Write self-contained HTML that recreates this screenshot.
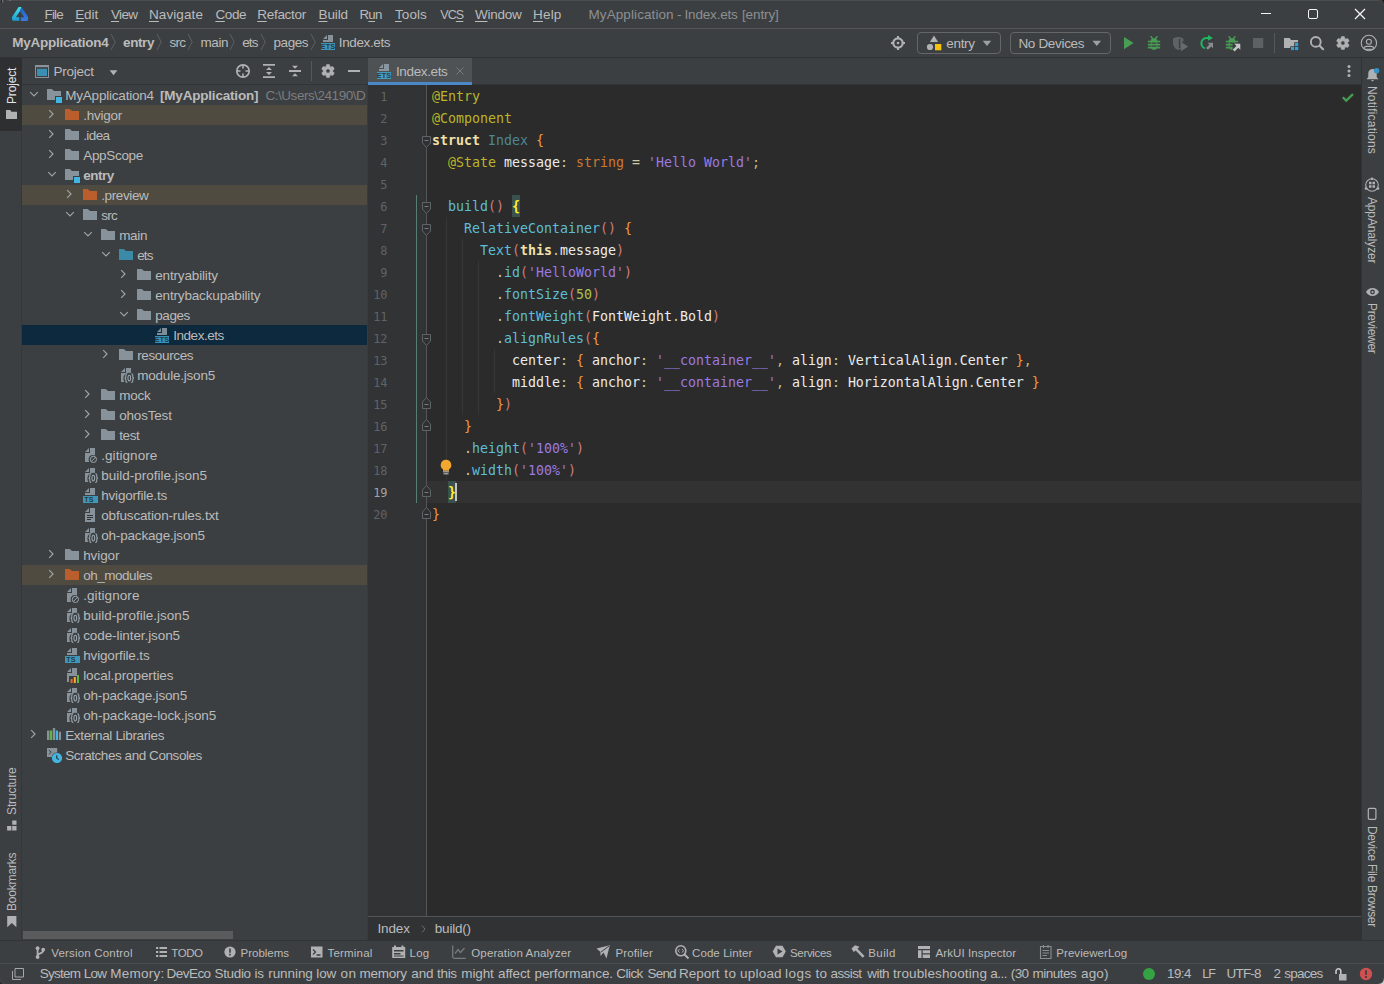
<!DOCTYPE html>
<html lang="en">
<head>
<meta charset="utf-8">
<title>MyApplication - Index.ets [entry]</title>
<style>
html,body{margin:0;padding:0;background:#3c3f41;}
body{width:1384px;height:984px;overflow:hidden;font-family:"Liberation Sans",sans-serif;font-size:13px;color:#bbbbbb;}
#app{position:relative;width:1384px;height:984px;overflow:hidden;background:#3c3f41;}
.b{position:absolute;display:block;}
.t{position:absolute;white-space:pre;line-height:20px;height:20px;}
.u{text-decoration:underline;text-underline-offset:2px;text-decoration-thickness:1px;}
.code{position:absolute;white-space:pre;font-family:"DejaVu Sans Mono","Liberation Mono",monospace;font-size:13.29px;line-height:22px;height:22px;color:#e6e6e6;}
.ln{position:absolute;white-space:pre;font-family:"DejaVu Sans Mono","Liberation Mono",monospace;font-size:11.9px;line-height:22px;height:22px;color:#606366;text-align:right;width:30px;}
.vt{position:absolute;white-space:pre;line-height:14px;height:14px;font-size:12px;transform-origin:0 0;}

</style>
</head>
<body>
<div id="app">
<!-- title bar -->
<div class="b" style="left:0px;top:0px;width:1384px;height:1px;background:#4b4d4f;"></div>
<div class="b" style="left:0px;top:28px;width:1384px;height:1px;background:#555555;"></div>
<svg class="b" style="left:10px;top:5px;" width="20" height="18" viewBox="10 5 20 18"><defs><linearGradient id="lgA" x1="0" y1="0" x2="0" y2="1"><stop offset="0" stop-color="#45e0ea"/><stop offset="1" stop-color="#1a9bd2"/></linearGradient><linearGradient id="lgB" x1="0" y1="0" x2="0" y2="1"><stop offset="0" stop-color="#1f63c8"/><stop offset="1" stop-color="#3b7be0"/></linearGradient></defs><path fill="url(#lgA)" d="M18.600 7h2.900l-1.500 3.900-4.100 6.300h3.400v3.600h-5.900q-.9 0-1.300-1.200l-.2-1.700q-.1-.5.300-1.200z"/><path fill="url(#lgB)" d="M21.500 7l6.400 9.800q.4.700.3 1.200l-.2 1.700q-.4 1.200-1.300 1.200h-5.900v-3.600h3.400l-4.200-6.400z"/></svg>
<span class="t" style="left:44.5px;top:5px;font-size:13.5px;letter-spacing:-0.815px;"><span class="u">F</span>ile</span>
<span class="t" style="left:75.2px;top:5px;font-size:13.5px;letter-spacing:-0.104px;"><span class="u">E</span>dit</span>
<span class="t" style="left:111px;top:5px;font-size:13.5px;letter-spacing:-0.689px;"><span class="u">V</span>iew</span>
<span class="t" style="left:149px;top:5px;font-size:13.5px;letter-spacing:0.090px;"><span class="u">N</span>avigate</span>
<span class="t" style="left:215.4px;top:5px;font-size:13.5px;letter-spacing:-0.388px;"><span class="u">C</span>ode</span>
<span class="t" style="left:257.2px;top:5px;font-size:13.5px;letter-spacing:-0.275px;"><span class="u">R</span>efactor</span>
<span class="t" style="left:318.5px;top:5px;font-size:13.5px;letter-spacing:-0.128px;"><span class="u">B</span>uild</span>
<span class="t" style="left:359.5px;top:5px;font-size:13.25px;letter-spacing:-0.719px;">R<span class="u">u</span>n</span>
<span class="t" style="left:395px;top:5px;font-size:13.5px;letter-spacing:0.059px;"><span class="u">T</span>ools</span>
<span class="t" style="left:440.17px;top:5px;font-size:12.5px;letter-spacing:-0.850px;">VC<span class="u">S</span></span>
<span class="t" style="left:475px;top:5px;font-size:13.5px;letter-spacing:-0.253px;"><span class="u">W</span>indow</span>
<span class="t" style="left:533px;top:5px;font-size:13.5px;letter-spacing:0.181px;"><span class="u">H</span>elp</span>
<span class="t" style="left:588.5px;top:5px;font-size:13.5px;color:#8d8f91;letter-spacing:0.089px;">MyApplication </span><span class="t" style="left:677px;top:5px;font-size:13.5px;color:#8d8f91;">- </span><span class="t" style="left:684.5px;top:5px;font-size:13.5px;color:#8d8f91;letter-spacing:-0.179px;">Index.ets </span><span class="t" style="left:742px;top:5px;font-size:13.5px;color:#8d8f91;letter-spacing:-0.127px;">[entry]</span>
<svg class="b" style="left:1255px;top:4px;" width="116" height="20" viewBox="1255 4 116 20"><rect x="1261" y="13" width="10" height="1" fill="#f4f4f4"/><rect x="1308.500" y="9.500" width="9" height="9" rx="1.500" fill="none" stroke="#f4f4f4" stroke-width="1"/><path stroke="#f4f4f4" stroke-width="1.250" fill="none" d="M1355 9l10 10M1365 9l-10 10"/></svg>
<!-- navigation bar -->
<div class="b" style="left:0px;top:57px;width:1384px;height:1px;background:#313233;"></div>
<span class="t" style="left:12.3px;top:33px;font-size:13.5px;font-weight:700;letter-spacing:-0.250px;">MyApplication4</span>
<svg class="b" style="left:109.9px;top:33px;" width="7" height="18" viewBox="0 0 7 18"><path fill="none" stroke="#5d6062" stroke-width="1" d="M1 1l4.200 8L1 17"/></svg>
<span class="t" style="left:123px;top:33px;font-size:13.5px;font-weight:700;letter-spacing:-0.376px;">entry</span>
<svg class="b" style="left:155.9px;top:33px;" width="7" height="18" viewBox="0 0 7 18"><path fill="none" stroke="#5d6062" stroke-width="1" d="M1 1l4.200 8L1 17"/></svg>
<span class="t" style="left:169.4px;top:33px;font-size:13.5px;letter-spacing:-0.723px;">src</span>
<svg class="b" style="left:186.9px;top:33px;" width="7" height="18" viewBox="0 0 7 18"><path fill="none" stroke="#5d6062" stroke-width="1" d="M1 1l4.200 8L1 17"/></svg>
<span class="t" style="left:200.6px;top:33px;font-size:13.5px;letter-spacing:-0.484px;">main</span>
<svg class="b" style="left:228.9px;top:33px;" width="7" height="18" viewBox="0 0 7 18"><path fill="none" stroke="#5d6062" stroke-width="1" d="M1 1l4.200 8L1 17"/></svg>
<span class="t" style="left:242.2px;top:33px;font-size:13.5px;letter-spacing:-0.829px;">ets</span>
<svg class="b" style="left:259.9px;top:33px;" width="7" height="18" viewBox="0 0 7 18"><path fill="none" stroke="#5d6062" stroke-width="1" d="M1 1l4.200 8L1 17"/></svg>
<span class="t" style="left:273.5px;top:33px;font-size:13.5px;letter-spacing:-0.433px;">pages</span>
<svg class="b" style="left:309.9px;top:33px;" width="7" height="18" viewBox="0 0 7 18"><path fill="none" stroke="#5d6062" stroke-width="1" d="M1 1l4.200 8L1 17"/></svg>
<svg class="b" style="left:320px;top:34px;" width="16" height="16" viewBox="0 0 16 16"><path fill="#9AA7B0" fill-opacity=".8" d="M7 1 3 5h4z"/><path fill="#9AA7B0" fill-opacity=".8" d="M8 1v5H3v2h10V1z"/><rect x="1" y="9" width="14" height="7" fill="#40B6E0" fill-opacity=".75"/><text x="8.0" y="15.300" font-family="Liberation Sans,sans-serif" font-size="7.200" font-weight="700" letter-spacing=".2" text-anchor="middle" fill="#231F20" fill-opacity=".8">ETS</text></svg>
<span class="t" style="left:338.8px;top:33px;font-size:13.5px;letter-spacing:-0.379px;">Index.ets</span>
<svg class="b" style="left:880px;top:30px;" width="504" height="26" viewBox="880 30 504 26"><circle cx="898" cy="43" r="4.700" fill="none" stroke="#afb1b3" stroke-width="2.200"/><circle cx="898" cy="43" r="1.300" fill="#afb1b3"/><path stroke="#afb1b3" stroke-width="2" d="M898 36v2M898 48v2M891 43h2M903 43h2"/><path fill="#afb1b3" d="M934 35.500l4.100 6.600h-8.200z"/><circle cx="930" cy="47" r="3.100" fill="#afb1b3"/><rect x="935" y="44" width="6.300" height="6.300" fill="#f4c20d"/><path fill="#9da0a2" d="M982.700 40.800h8.600L987 46z"/><path fill="#9da0a2" d="M1092.500 40.800h8.600l-4.300 5.200z"/><path fill="#499c54" d="M1124 37l9.600 6.100L1124 49.200z"/><path stroke="#499c54" stroke-width="1.500" stroke-linecap="round" fill="none" d="M1151.1 36.699999999999996l1.900 2.400M1156.9 36.699999999999996l-1.900 2.400"/><path fill="#499c54" d="M1150.6 41.5a3.400 3.300 0 0 1 6.800 0v4.600a3.400 3.800 0 0 1-6.800 0z"/><path stroke="#499c54" stroke-width="1.700" d="M1147.8 41.5h12.400M1147.8 44.599999999999994h12.400M1147.8 47.7h12.400"/><path stroke="#3c3f41" stroke-width="1.200" d="M1151.5 43.05h5M1151.5 46.15h5"/><path fill="#5f6264" d="M1173 38.300l5.200-1.500 5.200 1.500v3.200l-2.600 1.300v6.200c-.7.300-1.600.700-2.600 1-3.400-1.100-5.200-3.500-5.200-7.200z"/><path fill="#3c3f41" d="M1178.900 39h1.300v9h-1.300z"/><path fill="#666a6c" d="M1181 42l7.200 4.600L1181 51.200z"/><path fill="none" stroke="#23b560" stroke-width="2" d="M1205 48.400A5.300 5.300 0 1 1 1208.500 38.200"/><path fill="#23b560" d="M1208 35l4.900 2.900-4.900 2.900z"/><path fill="#8a8d8f" d="M1207.600 42.800h5.400v5.400l-1.800-1.800-3.300 3.300-1.800-1.800 3.300-3.300z"/><path stroke="#499c54" stroke-width="1.500" stroke-linecap="round" fill="none" d="M1229.1 36.699999999999996l1.900 2.400M1234.9 36.699999999999996l-1.900 2.400"/><path fill="#499c54" d="M1228.6 41.5a3.400 3.300 0 0 1 6.800 0v4.600a3.400 3.800 0 0 1-6.800 0z"/><path stroke="#499c54" stroke-width="1.700" d="M1225.8 41.5h12.400M1225.8 44.599999999999994h12.400M1225.8 47.7h12.400"/><path stroke="#3c3f41" stroke-width="1.200" d="M1229.5 43.05h5M1229.5 46.15h5"/><path fill="#3c3f41" d="M1232.600 43.300h9v9h-9z"/><path fill="#c6c8ca" d="M1234.300 43.700h6v6l-2-2-3.700 3.700-1.800-1.800 3.700-3.700z"/><rect x="1253" y="38" width="10.200" height="10" fill="#5e6163"/><rect x="1274" y="33" width="1" height="20" fill="#555759"/><path fill="#afb1b3" d="M1284 38h5.700l1.300 2h7v2.200h-3.800v4h-4v1.800H1284z"/><rect x="1291" y="47" width="3.100" height="3.100" fill="#389fd6"/><rect x="1295.100" y="47" width="3.100" height="3.100" fill="#389fd6"/><rect x="1295.100" y="43" width="3.100" height="3.100" fill="#389fd6"/><circle cx="1315.800" cy="41.900" r="4.900" fill="none" stroke="#afb1b3" stroke-width="1.900"/><path stroke="#afb1b3" stroke-width="2.200" stroke-linecap="round" d="M1319.600 45.700l3.500 3.500"/><path fill="#afb1b3" fill-rule="evenodd" stroke="#afb1b3" stroke-width=".8" stroke-linejoin="round" d="M1340.90 38.75 L1341.55 36.64 L1344.25 36.64 L1344.90 38.75 L1345.58 39.14 L1347.73 38.65 L1349.08 40.99 L1347.58 42.61 L1347.58 43.39 L1349.08 45.01 L1347.73 47.35 L1345.58 46.86 L1344.90 47.25 L1344.25 49.36 L1341.55 49.36 L1340.90 47.25 L1340.22 46.86 L1338.07 47.35 L1336.72 45.01 L1338.22 43.39 L1338.22 42.61 L1336.72 40.99 L1338.07 38.65 L1340.22 39.14Z M1340.70 43.00a2.2 2.2 0 1 0 4.4 0a2.2 2.2 0 1 0 -4.4 0Z"/><circle cx="1368.900" cy="43" r="7.700" fill="none" stroke="#afb1b3" stroke-width="1.100"/><circle cx="1368.900" cy="41.700" r="2.500" fill="none" stroke="#afb1b3" stroke-width="1.100"/><path fill="none" stroke="#afb1b3" stroke-width="1.100" d="M1363.600 48.600c.4-1.500 1.400-2.200 2.800-2.200h5c1.400 0 2.400.7 2.800 2.200"/><path stroke="#afb1b3" stroke-width="1.100" d="M1364.300 49.300h9.200"/></svg>
<div class="b" style="left:917px;top:32px;width:84px;height:22px;border:1px solid #646668;border-radius:4px;box-sizing:border-box;"></div>
<span class="t" style="left:946.3px;top:34px;font-size:13.5px;letter-spacing:-0.316px;">entry</span>
<div class="b" style="left:1010px;top:32px;width:101px;height:22px;border:1px solid #646668;border-radius:4px;box-sizing:border-box;"></div>
<span class="t" style="left:1018.4px;top:34px;font-size:13.5px;letter-spacing:-0.319px;">No Devices</span>
<!-- project tool window header -->
<div class="b" style="left:0px;top:84px;width:368px;height:1px;background:#323537;"></div>
<svg class="b" style="left:35px;top:65px;" width="14" height="13" viewBox="0 0 14 13"><rect x=".5" y=".5" width="13" height="12" fill="none" stroke="#87929a" stroke-width="1"/><rect x="0" y="0" width="14" height="2.200" fill="#87929a"/><rect x="2" y="3.800" width="10" height="7.200" fill="#3a8fb4"/></svg>
<span class="t" style="left:53.6px;top:62px;font-size:13.5px;letter-spacing:-0.278px;">Project</span>
<svg class="b" style="left:109px;top:70px;" width="9" height="6" viewBox="0 0 9 6"><path fill="#afb1b3" d="M.6.200h7.800L4.500 5.300z"/></svg>
<svg class="b" style="left:235px;top:63px;" width="16" height="16" viewBox="0 0 16 16"><circle cx="8" cy="8" r="6.200" fill="none" stroke="#afb1b3" stroke-width="1.700"/><path stroke="#afb1b3" stroke-width="1.600" d="M8 1.500v4M8 10.500v4M1.500 8h4M10.500 8h4"/></svg>
<svg class="b" style="left:261px;top:63px;" width="16" height="16" viewBox="0 0 16 16"><path fill="#afb1b3" d="M2 1h12v1.800H2zM2 13.200h12V15H2zM8 4l3 3H5zM8 12l3-3H5z"/></svg>
<svg class="b" style="left:287px;top:63px;" width="16" height="16" viewBox="0 0 16 16"><path fill="#afb1b3" d="M2 7.100h12v1.800H2zM8 5.800l3-3H5zM8 10.200l3 3H5z"/></svg>
<div class="b" style="left:311px;top:61px;width:1px;height:20px;background:#555759;"></div>
<svg class="b" style="left:320px;top:63px;" width="16" height="16" viewBox="320 63 16 16"><path fill="#afb1b3" fill-rule="evenodd" stroke="#afb1b3" stroke-width=".8" stroke-linejoin="round" d="M326.00 66.75 L326.65 64.64 L329.35 64.64 L330.00 66.75 L330.68 67.14 L332.83 66.65 L334.18 68.99 L332.68 70.61 L332.68 71.39 L334.18 73.01 L332.83 75.35 L330.68 74.86 L330.00 75.25 L329.35 77.36 L326.65 77.36 L326.00 75.25 L325.32 74.86 L323.17 75.35 L321.82 73.01 L323.32 71.39 L323.32 70.61 L321.82 68.99 L323.17 66.65 L325.32 67.14Z M325.80 71.00a2.2 2.2 0 1 0 4.4 0a2.2 2.2 0 1 0 -4.4 0Z"/></svg>
<div class="b" style="left:348px;top:70px;width:12px;height:2px;background:#afb1b3;"></div>
<!-- editor tabs -->
<div class="b" style="left:368px;top:58px;width:104px;height:27px;background:#4e5254;"></div>
<div class="b" style="left:368px;top:82px;width:104px;height:3px;background:#4a88c7;"></div>
<div class="b" style="left:472px;top:84px;width:889px;height:1px;background:#323537;"></div>
<svg class="b" style="left:376px;top:63px;" width="16" height="16" viewBox="0 0 16 16"><path fill="#9AA7B0" fill-opacity=".8" d="M7 1 3 5h4z"/><path fill="#9AA7B0" fill-opacity=".8" d="M8 1v5H3v2h10V1z"/><rect x="1" y="9" width="14" height="7" fill="#40B6E0" fill-opacity=".75"/><text x="8.0" y="15.300" font-family="Liberation Sans,sans-serif" font-size="7.200" font-weight="700" letter-spacing=".2" text-anchor="middle" fill="#231F20" fill-opacity=".8">ETS</text></svg>
<span class="t" style="left:396px;top:62px;font-size:13.5px;letter-spacing:-0.379px;">Index.ets</span>
<svg class="b" style="left:454px;top:65px;" width="12" height="12" viewBox="0 0 12 12"><path stroke="#77797b" stroke-width="1" d="M2.500 2.500l7 7M9.500 2.500l-7 7"/></svg>
<svg class="b" style="left:1346px;top:64px;" width="6" height="14" viewBox="0 0 6 14"><circle cx="3" cy="2.500" r="1.500" fill="#afb1b3"/><circle cx="3" cy="7" r="1.500" fill="#afb1b3"/><circle cx="3" cy="11.500" r="1.500" fill="#afb1b3"/></svg>
<!-- project tree -->
<div class="b" style="left:22px;top:85px;width:345px;height:855px;overflow:hidden;">
<svg class="b" style="left:5.5px;top:5.2px;" width="12" height="8" viewBox="0 0 12 8"><path fill="none" stroke="#a0a3a5" stroke-width="1.2" d="M2.200 2.200 6 6 9.800 2.200"/></svg>
<svg class="b" style="left:24px;top:2px;" width="16" height="16" viewBox="0 0 16 16"><path fill="#9AA7B0" fill-opacity=".8" d="M1 13h8V9h6V4H8L5.800 2H1z"/><rect x="10" y="10" width="6" height="6" fill="#40B6E0"/></svg>
<span class="t" style="left:43.2px;top:1px;font-size:13.5px;letter-spacing:-0.203px;">MyApplication4</span>
<span class="t" style="left:138px;top:1px;font-size:13.5px;font-weight:700;letter-spacing:-0.196px;">[MyApplication]</span>
<span class="t" style="left:243.5px;top:1px;font-size:13.5px;color:#7b7d7f;letter-spacing:-0.470px;">C:\Users\24190\D</span>
<div class="b" style="left:0px;top:20px;width:345px;height:20px;background:#4f4b41;"></div>
<svg class="b" style="left:25.2px;top:23.4px;" width="8" height="12" viewBox="0 0 8 12"><path fill="none" stroke="#a0a3a5" stroke-width="1.2" d="M2.200 2.200 6 6 2.200 9.800"/></svg>
<svg class="b" style="left:42px;top:22px;" width="16" height="16" viewBox="0 0 16 16"><path fill="#b95e2c" d="M1 13h14V4H8L5.800 2H1z"/></svg>
<span class="t" style="left:61.2px;top:21px;font-size:13.5px;letter-spacing:-0.254px;">.hvigor</span>
<svg class="b" style="left:25.2px;top:43.4px;" width="8" height="12" viewBox="0 0 8 12"><path fill="none" stroke="#a0a3a5" stroke-width="1.2" d="M2.200 2.200 6 6 2.200 9.800"/></svg>
<svg class="b" style="left:42px;top:42px;" width="16" height="16" viewBox="0 0 16 16"><path fill="#9AA7B0" fill-opacity=".8" d="M1 13h14V4H8L5.800 2H1z"/></svg>
<span class="t" style="left:61.2px;top:41px;font-size:13.5px;letter-spacing:-0.592px;">.idea</span>
<svg class="b" style="left:25.2px;top:63.4px;" width="8" height="12" viewBox="0 0 8 12"><path fill="none" stroke="#a0a3a5" stroke-width="1.2" d="M2.200 2.200 6 6 2.200 9.800"/></svg>
<svg class="b" style="left:42px;top:62px;" width="16" height="16" viewBox="0 0 16 16"><path fill="#9AA7B0" fill-opacity=".8" d="M1 13h14V4H8L5.800 2H1z"/></svg>
<span class="t" style="left:61.2px;top:61px;font-size:13.5px;letter-spacing:-0.313px;">AppScope</span>
<svg class="b" style="left:23.5px;top:85.2px;" width="12" height="8" viewBox="0 0 12 8"><path fill="none" stroke="#a0a3a5" stroke-width="1.2" d="M2.200 2.200 6 6 9.800 2.200"/></svg>
<svg class="b" style="left:42px;top:82px;" width="16" height="16" viewBox="0 0 16 16"><path fill="#9AA7B0" fill-opacity=".8" d="M1 13h8V9h6V4H8L5.800 2H1z"/><rect x="10" y="10" width="6" height="6" fill="#40B6E0"/></svg>
<span class="t" style="left:61.2px;top:81px;font-size:13.5px;font-weight:700;letter-spacing:-0.476px;">entry</span>
<div class="b" style="left:0px;top:100px;width:345px;height:20px;background:#4f4b41;"></div>
<svg class="b" style="left:43.2px;top:103.4px;" width="8" height="12" viewBox="0 0 8 12"><path fill="none" stroke="#a0a3a5" stroke-width="1.2" d="M2.200 2.200 6 6 2.200 9.800"/></svg>
<svg class="b" style="left:60px;top:102px;" width="16" height="16" viewBox="0 0 16 16"><path fill="#b95e2c" d="M1 13h14V4H8L5.800 2H1z"/></svg>
<span class="t" style="left:79.2px;top:101px;font-size:13.5px;letter-spacing:-0.374px;">.preview</span>
<svg class="b" style="left:41.5px;top:125.2px;" width="12" height="8" viewBox="0 0 12 8"><path fill="none" stroke="#a0a3a5" stroke-width="1.2" d="M2.200 2.200 6 6 9.800 2.200"/></svg>
<svg class="b" style="left:60px;top:122px;" width="16" height="16" viewBox="0 0 16 16"><path fill="#9AA7B0" fill-opacity=".8" d="M1 13h14V4H8L5.800 2H1z"/></svg>
<span class="t" style="left:79.2px;top:121px;font-size:13.5px;letter-spacing:-0.723px;">src</span>
<svg class="b" style="left:59.5px;top:145.2px;" width="12" height="8" viewBox="0 0 12 8"><path fill="none" stroke="#a0a3a5" stroke-width="1.2" d="M2.200 2.200 6 6 9.800 2.200"/></svg>
<svg class="b" style="left:78px;top:142px;" width="16" height="16" viewBox="0 0 16 16"><path fill="#9AA7B0" fill-opacity=".8" d="M1 13h14V4H8L5.800 2H1z"/></svg>
<span class="t" style="left:97.2px;top:141px;font-size:13.5px;letter-spacing:-0.351px;">main</span>
<svg class="b" style="left:77.5px;top:165.2px;" width="12" height="8" viewBox="0 0 12 8"><path fill="none" stroke="#a0a3a5" stroke-width="1.2" d="M2.200 2.200 6 6 9.800 2.200"/></svg>
<svg class="b" style="left:96px;top:162px;" width="16" height="16" viewBox="0 0 16 16"><path fill="#3a8aa8" d="M1 13h14V4H8L5.800 2H1z"/></svg>
<span class="t" style="left:115.2px;top:161px;font-size:13.5px;letter-spacing:-0.829px;">ets</span>
<svg class="b" style="left:97.2px;top:183.4px;" width="8" height="12" viewBox="0 0 8 12"><path fill="none" stroke="#a0a3a5" stroke-width="1.2" d="M2.200 2.200 6 6 2.200 9.800"/></svg>
<svg class="b" style="left:114px;top:182px;" width="16" height="16" viewBox="0 0 16 16"><path fill="#9AA7B0" fill-opacity=".8" d="M1 13h14V4H8L5.800 2H1z"/></svg>
<span class="t" style="left:133.2px;top:181px;font-size:13.5px;letter-spacing:-0.152px;">entryability</span>
<svg class="b" style="left:97.2px;top:203.4px;" width="8" height="12" viewBox="0 0 8 12"><path fill="none" stroke="#a0a3a5" stroke-width="1.2" d="M2.200 2.200 6 6 2.200 9.800"/></svg>
<svg class="b" style="left:114px;top:202px;" width="16" height="16" viewBox="0 0 16 16"><path fill="#9AA7B0" fill-opacity=".8" d="M1 13h14V4H8L5.800 2H1z"/></svg>
<span class="t" style="left:133.2px;top:201px;font-size:13.5px;letter-spacing:-0.159px;">entrybackupability</span>
<svg class="b" style="left:95.5px;top:225.2px;" width="12" height="8" viewBox="0 0 12 8"><path fill="none" stroke="#a0a3a5" stroke-width="1.2" d="M2.200 2.200 6 6 9.800 2.200"/></svg>
<svg class="b" style="left:114px;top:222px;" width="16" height="16" viewBox="0 0 16 16"><path fill="#9AA7B0" fill-opacity=".8" d="M1 13h14V4H8L5.800 2H1z"/></svg>
<span class="t" style="left:133.2px;top:221px;font-size:13.5px;letter-spacing:-0.408px;">pages</span>
<div class="b" style="left:0px;top:240px;width:345px;height:20px;background:#0d293e;"></div>
<svg class="b" style="left:132px;top:242px;" width="16" height="16" viewBox="0 0 16 16"><path fill="#9AA7B0" fill-opacity=".8" d="M7 1 3 5h4z"/><path fill="#9AA7B0" fill-opacity=".8" d="M8 1v5H3v2h10V1z"/><rect x="1" y="9" width="14" height="7" fill="#40B6E0" fill-opacity=".75"/><text x="8.0" y="15.300" font-family="Liberation Sans,sans-serif" font-size="7.200" font-weight="700" letter-spacing=".2" text-anchor="middle" fill="#231F20" fill-opacity=".8">ETS</text></svg>
<span class="t" style="left:151.2px;top:241px;font-size:13.5px;letter-spacing:-0.454px;">Index.ets</span>
<svg class="b" style="left:79.2px;top:263.4px;" width="8" height="12" viewBox="0 0 8 12"><path fill="none" stroke="#a0a3a5" stroke-width="1.2" d="M2.200 2.200 6 6 2.200 9.800"/></svg>
<svg class="b" style="left:96px;top:262px;" width="16" height="16" viewBox="0 0 16 16"><path fill="#9AA7B0" fill-opacity=".8" d="M1 13h14V4H8L5.800 2H1z"/></svg>
<span class="t" style="left:115.2px;top:261px;font-size:13.5px;letter-spacing:-0.365px;">resources</span>
<svg class="b" style="left:96px;top:282px;" width="16" height="16" viewBox="0 0 16 16"><path fill="#9AA7B0" fill-opacity=".8" d="M7 1 3 5h4z"/><path fill="#9AA7B0" fill-opacity=".8" d="M8 1v5H3v9h3.400a5.600 5.600 0 0 1-1-3.800A5.500 5.500 0 0 1 11 5.700a5.500 5.500 0 0 1 2 .400V1z"/><ellipse cx="11.300" cy="11.100" rx="1.350" ry="2.900" fill="none" stroke="#9AA7B0" stroke-width="1.050"/><path fill="none" stroke="#9AA7B0" stroke-width="1.100" d="M9.300 6.700c-1.300 0-1.500.7-1.500 1.700v1.500c0 .8-.4 1.200-1.200 1.200.8 0 1.200.4 1.200 1.200v1.500c0 1 .2 1.700 1.500 1.700M13.300 6.700c1.300 0 1.500.7 1.500 1.700v1.500c0 .8.400 1.200 1.200 1.200-.8 0-1.200.4-1.200 1.200v1.500c0 1-.2 1.700-1.500 1.700"/></svg>
<span class="t" style="left:115.2px;top:281px;font-size:13.5px;letter-spacing:-0.208px;">module.json5</span>
<svg class="b" style="left:61.2px;top:303.4px;" width="8" height="12" viewBox="0 0 8 12"><path fill="none" stroke="#a0a3a5" stroke-width="1.2" d="M2.200 2.200 6 6 2.200 9.800"/></svg>
<svg class="b" style="left:78px;top:302px;" width="16" height="16" viewBox="0 0 16 16"><path fill="#9AA7B0" fill-opacity=".8" d="M1 13h14V4H8L5.800 2H1z"/></svg>
<span class="t" style="left:97.2px;top:301px;font-size:13.5px;letter-spacing:-0.235px;">mock</span>
<svg class="b" style="left:61.2px;top:323.4px;" width="8" height="12" viewBox="0 0 8 12"><path fill="none" stroke="#a0a3a5" stroke-width="1.2" d="M2.200 2.200 6 6 2.200 9.800"/></svg>
<svg class="b" style="left:78px;top:322px;" width="16" height="16" viewBox="0 0 16 16"><path fill="#9AA7B0" fill-opacity=".8" d="M1 13h14V4H8L5.800 2H1z"/></svg>
<span class="t" style="left:97.2px;top:321px;font-size:13.5px;letter-spacing:-0.183px;">ohosTest</span>
<svg class="b" style="left:61.2px;top:343.4px;" width="8" height="12" viewBox="0 0 8 12"><path fill="none" stroke="#a0a3a5" stroke-width="1.2" d="M2.200 2.200 6 6 2.200 9.800"/></svg>
<svg class="b" style="left:78px;top:342px;" width="16" height="16" viewBox="0 0 16 16"><path fill="#9AA7B0" fill-opacity=".8" d="M1 13h14V4H8L5.800 2H1z"/></svg>
<span class="t" style="left:97.2px;top:341px;font-size:13.5px;letter-spacing:-0.403px;">test</span>
<svg class="b" style="left:60px;top:362px;" width="16" height="16" viewBox="0 0 16 16"><path fill="#9AA7B0" fill-opacity=".8" d="M7 1 3 5h4z"/><path fill="#9AA7B0" fill-opacity=".8" d="M8 1v5H3v9h4.3A4.4 4.4 0 0 1 6.6 12 4.4 4.4 0 0 1 11 8a4.4 4.4 0 0 1 2 .5V1z"/><circle cx="11.4" cy="12.4" r="3.1" fill="none" stroke="#9AA7B0" stroke-width="1"/><path stroke="#9AA7B0" stroke-width="1" d="M9.3 14.5l4.2-4.2"/></svg>
<span class="t" style="left:79.2px;top:361px;font-size:13.5px;letter-spacing:0.064px;">.gitignore</span>
<svg class="b" style="left:60px;top:382px;" width="16" height="16" viewBox="0 0 16 16"><path fill="#9AA7B0" fill-opacity=".8" d="M7 1 3 5h4z"/><path fill="#9AA7B0" fill-opacity=".8" d="M8 1v5H3v9h3.400a5.600 5.600 0 0 1-1-3.800A5.500 5.500 0 0 1 11 5.700a5.500 5.500 0 0 1 2 .400V1z"/><ellipse cx="11.300" cy="11.100" rx="1.350" ry="2.900" fill="none" stroke="#9AA7B0" stroke-width="1.050"/><path fill="none" stroke="#9AA7B0" stroke-width="1.100" d="M9.300 6.700c-1.300 0-1.500.7-1.500 1.700v1.500c0 .8-.4 1.200-1.200 1.200.8 0 1.200.4 1.200 1.200v1.500c0 1 .2 1.700 1.500 1.700M13.300 6.700c1.300 0 1.500.7 1.500 1.700v1.500c0 .8.400 1.200 1.200 1.200-.8 0-1.200.4-1.200 1.200v1.500c0 1-.2 1.700-1.500 1.700"/></svg>
<span class="t" style="left:79.2px;top:381px;font-size:13.5px;letter-spacing:-0.000px;">build-profile.json5</span>
<svg class="b" style="left:60px;top:402px;" width="16" height="16" viewBox="0 0 16 16"><path fill="#9AA7B0" fill-opacity=".8" d="M7 1 3 5h4z"/><path fill="#9AA7B0" fill-opacity=".8" d="M8 1v5H3v2h10V1z"/><rect x="1" y="9" width="15" height="7" fill="#40B6E0" fill-opacity=".75"/><text x="2.200" y="15.300" font-family="Liberation Sans,sans-serif" font-size="7.200" font-weight="700" letter-spacing=".2" fill="#231F20" fill-opacity=".8">TS</text></svg>
<span class="t" style="left:79.2px;top:401px;font-size:13.5px;letter-spacing:-0.186px;">hvigorfile.ts</span>
<svg class="b" style="left:60px;top:422px;" width="16" height="16" viewBox="0 0 16 16"><path fill="#9AA7B0" fill-opacity=".8" d="M7 1 3 5h4z"/><path fill="#9AA7B0" fill-opacity=".8" d="M8 1v5H3v9h10V1z"/><path fill="#2f3234" d="M5 8h6v1H5zM5 10h6v1H5zM5 12h4v1H5z"/></svg>
<span class="t" style="left:79.2px;top:421px;font-size:13.5px;letter-spacing:-0.158px;">obfuscation-rules.txt</span>
<svg class="b" style="left:60px;top:442px;" width="16" height="16" viewBox="0 0 16 16"><path fill="#9AA7B0" fill-opacity=".8" d="M7 1 3 5h4z"/><path fill="#9AA7B0" fill-opacity=".8" d="M8 1v5H3v9h3.400a5.600 5.600 0 0 1-1-3.800A5.500 5.500 0 0 1 11 5.700a5.500 5.500 0 0 1 2 .400V1z"/><ellipse cx="11.300" cy="11.100" rx="1.350" ry="2.900" fill="none" stroke="#9AA7B0" stroke-width="1.050"/><path fill="none" stroke="#9AA7B0" stroke-width="1.100" d="M9.300 6.700c-1.300 0-1.500.7-1.500 1.700v1.500c0 .8-.4 1.200-1.200 1.200.8 0 1.200.4 1.200 1.200v1.500c0 1 .2 1.700 1.500 1.700M13.300 6.700c1.300 0 1.500.7 1.500 1.700v1.500c0 .8.400 1.200 1.200 1.200-.8 0-1.200.4-1.200 1.200v1.500c0 1-.2 1.700-1.500 1.700"/></svg>
<span class="t" style="left:79.2px;top:441px;font-size:13.5px;letter-spacing:-0.178px;">oh-package.json5</span>
<svg class="b" style="left:25.2px;top:463.4px;" width="8" height="12" viewBox="0 0 8 12"><path fill="none" stroke="#a0a3a5" stroke-width="1.2" d="M2.200 2.200 6 6 2.200 9.800"/></svg>
<svg class="b" style="left:42px;top:462px;" width="16" height="16" viewBox="0 0 16 16"><path fill="#9AA7B0" fill-opacity=".8" d="M1 13h14V4H8L5.800 2H1z"/></svg>
<span class="t" style="left:61.2px;top:461px;font-size:13.5px;letter-spacing:-0.095px;">hvigor</span>
<div class="b" style="left:0px;top:480px;width:345px;height:20px;background:#4f4b41;"></div>
<svg class="b" style="left:25.2px;top:483.4px;" width="8" height="12" viewBox="0 0 8 12"><path fill="none" stroke="#a0a3a5" stroke-width="1.2" d="M2.200 2.200 6 6 2.200 9.800"/></svg>
<svg class="b" style="left:42px;top:482px;" width="16" height="16" viewBox="0 0 16 16"><path fill="#b95e2c" d="M1 13h14V4H8L5.800 2H1z"/></svg>
<span class="t" style="left:61.2px;top:481px;font-size:13.5px;letter-spacing:-0.478px;">oh_modules</span>
<svg class="b" style="left:42px;top:502px;" width="16" height="16" viewBox="0 0 16 16"><path fill="#9AA7B0" fill-opacity=".8" d="M7 1 3 5h4z"/><path fill="#9AA7B0" fill-opacity=".8" d="M8 1v5H3v9h4.3A4.4 4.4 0 0 1 6.6 12 4.4 4.4 0 0 1 11 8a4.4 4.4 0 0 1 2 .5V1z"/><circle cx="11.4" cy="12.4" r="3.1" fill="none" stroke="#9AA7B0" stroke-width="1"/><path stroke="#9AA7B0" stroke-width="1" d="M9.3 14.5l4.2-4.2"/></svg>
<span class="t" style="left:61.2px;top:501px;font-size:13.5px;letter-spacing:0.075px;">.gitignore</span>
<svg class="b" style="left:42px;top:522px;" width="16" height="16" viewBox="0 0 16 16"><path fill="#9AA7B0" fill-opacity=".8" d="M7 1 3 5h4z"/><path fill="#9AA7B0" fill-opacity=".8" d="M8 1v5H3v9h3.400a5.600 5.600 0 0 1-1-3.800A5.500 5.500 0 0 1 11 5.700a5.500 5.500 0 0 1 2 .400V1z"/><ellipse cx="11.300" cy="11.100" rx="1.350" ry="2.900" fill="none" stroke="#9AA7B0" stroke-width="1.050"/><path fill="none" stroke="#9AA7B0" stroke-width="1.100" d="M9.300 6.700c-1.300 0-1.500.7-1.500 1.700v1.500c0 .8-.4 1.200-1.200 1.200.8 0 1.200.4 1.200 1.200v1.500c0 1 .2 1.700 1.500 1.700M13.300 6.700c1.300 0 1.500.7 1.500 1.700v1.500c0 .8.400 1.200 1.200 1.200-.8 0-1.200.4-1.200 1.200v1.500c0 1-.2 1.700-1.500 1.700"/></svg>
<span class="t" style="left:61.2px;top:521px;font-size:13.5px;letter-spacing:0.022px;">build-profile.json5</span>
<svg class="b" style="left:42px;top:542px;" width="16" height="16" viewBox="0 0 16 16"><path fill="#9AA7B0" fill-opacity=".8" d="M7 1 3 5h4z"/><path fill="#9AA7B0" fill-opacity=".8" d="M8 1v5H3v9h3.400a5.600 5.600 0 0 1-1-3.800A5.500 5.500 0 0 1 11 5.700a5.500 5.500 0 0 1 2 .400V1z"/><ellipse cx="11.300" cy="11.100" rx="1.350" ry="2.900" fill="none" stroke="#9AA7B0" stroke-width="1.050"/><path fill="none" stroke="#9AA7B0" stroke-width="1.100" d="M9.300 6.700c-1.300 0-1.500.7-1.500 1.700v1.500c0 .8-.4 1.200-1.200 1.200.8 0 1.200.4 1.200 1.200v1.500c0 1 .2 1.700 1.500 1.700M13.300 6.700c1.300 0 1.500.7 1.500 1.700v1.500c0 .8.400 1.200 1.200 1.200-.8 0-1.200.4-1.200 1.200v1.500c0 1-.2 1.700-1.500 1.700"/></svg>
<span class="t" style="left:61.2px;top:541px;font-size:13.5px;letter-spacing:-0.088px;">code-linter.json5</span>
<svg class="b" style="left:42px;top:562px;" width="16" height="16" viewBox="0 0 16 16"><path fill="#9AA7B0" fill-opacity=".8" d="M7 1 3 5h4z"/><path fill="#9AA7B0" fill-opacity=".8" d="M8 1v5H3v2h10V1z"/><rect x="1" y="9" width="15" height="7" fill="#40B6E0" fill-opacity=".75"/><text x="2.200" y="15.300" font-family="Liberation Sans,sans-serif" font-size="7.200" font-weight="700" letter-spacing=".2" fill="#231F20" fill-opacity=".8">TS</text></svg>
<span class="t" style="left:61.2px;top:561px;font-size:13.5px;letter-spacing:-0.152px;">hvigorfile.ts</span>
<svg class="b" style="left:42px;top:582px;" width="16" height="16" viewBox="0 0 16 16"><path fill="#9AA7B0" fill-opacity=".8" d="M7 1 3 5h4z"/><path fill="#9AA7B0" fill-opacity=".8" d="M8 1v5H3v9h2V9h8V1z"/><rect x="6.6" y="12" width="2" height="4" fill="#f26522"/><rect x="9.8" y="10" width="2" height="6" fill="#f4af3d"/><rect x="13" y="8" width="2" height="8" fill="#62b543"/></svg>
<span class="t" style="left:61.2px;top:581px;font-size:13.5px;letter-spacing:-0.080px;">local.properties</span>
<svg class="b" style="left:42px;top:602px;" width="16" height="16" viewBox="0 0 16 16"><path fill="#9AA7B0" fill-opacity=".8" d="M7 1 3 5h4z"/><path fill="#9AA7B0" fill-opacity=".8" d="M8 1v5H3v9h3.400a5.600 5.600 0 0 1-1-3.800A5.500 5.500 0 0 1 11 5.700a5.500 5.500 0 0 1 2 .400V1z"/><ellipse cx="11.300" cy="11.100" rx="1.350" ry="2.900" fill="none" stroke="#9AA7B0" stroke-width="1.050"/><path fill="none" stroke="#9AA7B0" stroke-width="1.100" d="M9.300 6.700c-1.300 0-1.500.7-1.500 1.700v1.500c0 .8-.4 1.200-1.200 1.200.8 0 1.200.4 1.200 1.200v1.500c0 1 .2 1.700 1.500 1.700M13.300 6.700c1.300 0 1.500.7 1.500 1.700v1.500c0 .8.400 1.200 1.200 1.200-.8 0-1.200.4-1.200 1.200v1.500c0 1-.2 1.700-1.500 1.700"/></svg>
<span class="t" style="left:61.2px;top:601px;font-size:13.5px;letter-spacing:-0.171px;">oh-package.json5</span>
<svg class="b" style="left:42px;top:622px;" width="16" height="16" viewBox="0 0 16 16"><path fill="#9AA7B0" fill-opacity=".8" d="M7 1 3 5h4z"/><path fill="#9AA7B0" fill-opacity=".8" d="M8 1v5H3v9h3.400a5.600 5.600 0 0 1-1-3.800A5.500 5.500 0 0 1 11 5.700a5.500 5.500 0 0 1 2 .400V1z"/><ellipse cx="11.300" cy="11.100" rx="1.350" ry="2.900" fill="none" stroke="#9AA7B0" stroke-width="1.050"/><path fill="none" stroke="#9AA7B0" stroke-width="1.100" d="M9.300 6.700c-1.300 0-1.500.7-1.500 1.700v1.500c0 .8-.4 1.200-1.200 1.200.8 0 1.200.4 1.200 1.200v1.500c0 1 .2 1.700 1.500 1.700M13.300 6.700c1.300 0 1.500.7 1.500 1.700v1.500c0 .8.400 1.200 1.200 1.200-.8 0-1.200.4-1.200 1.200v1.500c0 1-.2 1.700-1.500 1.700"/></svg>
<span class="t" style="left:61.2px;top:621px;font-size:13.5px;letter-spacing:-0.099px;">oh-package-lock.json5</span>
<svg class="b" style="left:7.2px;top:643.4px;" width="8" height="12" viewBox="0 0 8 12"><path fill="none" stroke="#a0a3a5" stroke-width="1.2" d="M2.200 2.200 6 6 2.200 9.800"/></svg>
<svg class="b" style="left:24px;top:642px;" width="16" height="16" viewBox="0 0 16 16"><rect x="1" y="3.500" width="2.500" height="9.500" fill="#9AA7B0" fill-opacity=".8"/><rect x="4" y="3.500" width="2.200" height="9.500" fill="#62b543"/><rect x="6.800" y="1.100" width="2.400" height="11.900" fill="#9AA7B0" fill-opacity=".8"/><rect x="9.800" y="3.500" width="2.200" height="9.500" fill="#40B6E0"/><rect x="12.800" y="4.800" width="2.200" height="8.200" fill="#9AA7B0" fill-opacity=".8"/></svg>
<span class="t" style="left:43.2px;top:641px;font-size:13.5px;letter-spacing:-0.341px;">External Libraries</span>
<svg class="b" style="left:24px;top:662px;" width="16" height="16" viewBox="0 0 16 16"><path fill="#9AA7B0" fill-opacity=".8" d="M1 1h10.200v4.600A5.400 5.400 0 0 0 5.800 10H1z"/><path fill="none" stroke="#3c3f41" stroke-width="1" d="M2.800 3l2.400 2.200-2.400 2.200"/><circle cx="11" cy="11" r="5.100" fill="#40B6E0"/><path fill="none" stroke="#2b3a42" stroke-width="1.200" d="M10.700 8.200v2.800l2 1.600"/></svg>
<span class="t" style="left:43.2px;top:661px;font-size:13.5px;letter-spacing:-0.437px;">Scratches and Consoles</span>
<div class="b" style="left:1px;top:846px;width:210px;height:8px;background:#595b5d;"></div>
</div>
<div class="b" style="left:367px;top:85px;width:1px;height:855px;background:#383a3c;"></div>
<!-- editor -->
<div class="b" style="left:368px;top:85px;width:993px;height:832px;background:#2b2b2b;"></div>
<div class="b" style="left:368px;top:85px;width:58px;height:832px;background:#313335;"></div>
<div class="b" style="left:426px;top:85px;width:1px;height:832px;background:#555555;"></div>
<div class="b" style="left:427px;top:481px;width:934px;height:22px;background:#323232;"></div>
<div class="b" style="left:416px;top:195px;width:1px;height:308px;background:#567f72;"></div>
<div class="b" style="left:446px;top:217px;width:1px;height:264px;background:#373737;"></div>
<div class="b" style="left:462px;top:239px;width:1px;height:176px;background:#373737;"></div>
<div class="b" style="left:478px;top:261px;width:1px;height:154px;background:#373737;"></div>
<div class="b" style="left:494px;top:349px;width:1px;height:44px;background:#373737;"></div>
<div class="b" style="left:512px;top:195px;width:8px;height:22px;background:#3b514d;"></div>
<div class="b" style="left:448px;top:481px;width:8px;height:22px;background:#3b514d;"></div>
<span class="ln" style="left:357.500px;top:86px;color:#606366;">1</span>
<span class="code" style="left:432px;top:86px;"><span style="color:#bbb529">@Entry</span></span>
<span class="ln" style="left:357.500px;top:108px;color:#606366;">2</span>
<span class="code" style="left:432px;top:108px;"><span style="color:#bbb529">@Component</span></span>
<span class="ln" style="left:357.500px;top:130px;color:#606366;">3</span>
<span class="code" style="left:432px;top:130px;"><b style="color:#f2e0a8">struct</b> <span style="color:#4e8694">Index</span> <span style="color:#f09a3a">{</span></span>
<span class="ln" style="left:357.500px;top:152px;color:#606366;">4</span>
<span class="code" style="left:432px;top:152px;">  <span style="color:#bbb529">@State</span> <span style="color:#ececec">message</span><span style="color:#cfcaa2">:</span> <span style="color:#cc7a32">string</span> <span style="color:#cfcaa2">=</span> <span style="color:#9a7ae0">'Hello World'</span><span style="color:#c2b980">;</span></span>
<span class="ln" style="left:357.500px;top:174px;color:#606366;">5</span>
<span class="ln" style="left:357.500px;top:196px;color:#606366;">6</span>
<span class="code" style="left:432px;top:196px;">  <span style="color:#5dbdd8">build</span><span style="color:#d07b78">()</span> <b style="color:#ffef28">{</b></span>
<span class="ln" style="left:357.500px;top:218px;color:#606366;">7</span>
<span class="code" style="left:432px;top:218px;">    <span style="color:#5dbdd8">RelativeContainer</span><span style="color:#d07b78">()</span> <span style="color:#f09a3a">{</span></span>
<span class="ln" style="left:357.500px;top:240px;color:#606366;">8</span>
<span class="code" style="left:432px;top:240px;">      <span style="color:#5dbdd8">Text</span><span style="color:#d07b78">(</span><b style="color:#f2e0a8">this</b><span style="color:#cfcaa2">.</span><span style="color:#ececec">message</span><span style="color:#d07b78">)</span></span>
<span class="ln" style="left:357.500px;top:262px;color:#606366;">9</span>
<span class="code" style="left:432px;top:262px;">        <span style="color:#cfcaa2">.</span><span style="color:#5dbdd8">id</span><span style="color:#d07b78">(</span><span style="color:#9a7ae0">'HelloWorld'</span><span style="color:#d07b78">)</span></span>
<span class="ln" style="left:357.500px;top:284px;color:#606366;">10</span>
<span class="code" style="left:432px;top:284px;">        <span style="color:#cfcaa2">.</span><span style="color:#5dbdd8">fontSize</span><span style="color:#d07b78">(</span><span style="color:#a9c34f">50</span><span style="color:#d07b78">)</span></span>
<span class="ln" style="left:357.500px;top:306px;color:#606366;">11</span>
<span class="code" style="left:432px;top:306px;">        <span style="color:#cfcaa2">.</span><span style="color:#5dbdd8">fontWeight</span><span style="color:#d07b78">(</span><span style="color:#ececec">FontWeight</span><span style="color:#cfcaa2">.</span><span style="color:#ececec">Bold</span><span style="color:#d07b78">)</span></span>
<span class="ln" style="left:357.500px;top:328px;color:#606366;">12</span>
<span class="code" style="left:432px;top:328px;">        <span style="color:#cfcaa2">.</span><span style="color:#5dbdd8">alignRules</span><span style="color:#d07b78">(</span><span style="color:#f09a3a">{</span></span>
<span class="ln" style="left:357.500px;top:350px;color:#606366;">13</span>
<span class="code" style="left:432px;top:350px;">          <span style="color:#ececec">center</span><span style="color:#cfcaa2">:</span> <span style="color:#f09a3a">{</span> <span style="color:#ececec">anchor</span><span style="color:#cfcaa2">:</span> <span style="color:#9a7ae0">'__container__'</span><span style="color:#c2b980">,</span> <span style="color:#ececec">align</span><span style="color:#cfcaa2">:</span> <span style="color:#ececec">VerticalAlign</span><span style="color:#cfcaa2">.</span><span style="color:#ececec">Center</span> <span style="color:#f09a3a">}</span><span style="color:#c2b980">,</span></span>
<span class="ln" style="left:357.500px;top:372px;color:#606366;">14</span>
<span class="code" style="left:432px;top:372px;">          <span style="color:#ececec">middle</span><span style="color:#cfcaa2">:</span> <span style="color:#f09a3a">{</span> <span style="color:#ececec">anchor</span><span style="color:#cfcaa2">:</span> <span style="color:#9a7ae0">'__container__'</span><span style="color:#c2b980">,</span> <span style="color:#ececec">align</span><span style="color:#cfcaa2">:</span> <span style="color:#ececec">HorizontalAlign</span><span style="color:#cfcaa2">.</span><span style="color:#ececec">Center</span> <span style="color:#f09a3a">}</span></span>
<span class="ln" style="left:357.500px;top:394px;color:#606366;">15</span>
<span class="code" style="left:432px;top:394px;">        <span style="color:#f09a3a">}</span><span style="color:#d07b78">)</span></span>
<span class="ln" style="left:357.500px;top:416px;color:#606366;">16</span>
<span class="code" style="left:432px;top:416px;">    <span style="color:#f09a3a">}</span></span>
<span class="ln" style="left:357.500px;top:438px;color:#606366;">17</span>
<span class="code" style="left:432px;top:438px;">    <span style="color:#cfcaa2">.</span><span style="color:#5dbdd8">height</span><span style="color:#d07b78">(</span><span style="color:#9a7ae0">'100%'</span><span style="color:#d07b78">)</span></span>
<span class="ln" style="left:357.500px;top:460px;color:#606366;">18</span>
<span class="code" style="left:432px;top:460px;">    <span style="color:#cfcaa2">.</span><span style="color:#5dbdd8">width</span><span style="color:#d07b78">(</span><span style="color:#9a7ae0">'100%'</span><span style="color:#d07b78">)</span></span>
<span class="ln" style="left:357.500px;top:482px;color:#a4a3a3;">19</span>
<span class="code" style="left:432px;top:482px;">  <b style="color:#ffef28">}</b></span>
<span class="ln" style="left:357.500px;top:504px;color:#606366;">20</span>
<span class="code" style="left:432px;top:504px;"><span style="color:#f09a3a">}</span></span>
<div class="b" style="left:455px;top:483px;width:2px;height:18px;background:#c4c4c4;"></div>
<svg class="b" style="left:421px;top:136px;" width="11" height="13" viewBox="0 0 11 13"><path fill="#2e3031" stroke="#606365" stroke-width="1" d="M1.500 .5h8v6.500l-4 4.500-4-4.500z"/><path stroke="#787b7d" stroke-width="1" d="M3.500 4.500h4"/></svg>
<svg class="b" style="left:421px;top:202px;" width="11" height="13" viewBox="0 0 11 13"><path fill="#2e3031" stroke="#606365" stroke-width="1" d="M1.500 .5h8v6.500l-4 4.500-4-4.500z"/><path stroke="#787b7d" stroke-width="1" d="M3.500 4.500h4"/></svg>
<svg class="b" style="left:421px;top:224px;" width="11" height="13" viewBox="0 0 11 13"><path fill="#2e3031" stroke="#606365" stroke-width="1" d="M1.500 .5h8v6.500l-4 4.500-4-4.500z"/><path stroke="#787b7d" stroke-width="1" d="M3.500 4.500h4"/></svg>
<svg class="b" style="left:421px;top:334px;" width="11" height="13" viewBox="0 0 11 13"><path fill="#2e3031" stroke="#606365" stroke-width="1" d="M1.500 .5h8v6.500l-4 4.500-4-4.500z"/><path stroke="#787b7d" stroke-width="1" d="M3.500 4.500h4"/></svg>
<svg class="b" style="left:421px;top:396px;" width="11" height="13" viewBox="0 0 11 13"><path fill="#2e3031" stroke="#606365" stroke-width="1" d="M1.500 12.500h8V6l-4-4.500-4 4.500z"/><path stroke="#787b7d" stroke-width="1" d="M3.500 8.500h4"/></svg>
<svg class="b" style="left:421px;top:418px;" width="11" height="13" viewBox="0 0 11 13"><path fill="#2e3031" stroke="#606365" stroke-width="1" d="M1.500 12.500h8V6l-4-4.500-4 4.500z"/><path stroke="#787b7d" stroke-width="1" d="M3.500 8.500h4"/></svg>
<svg class="b" style="left:421px;top:484px;" width="11" height="13" viewBox="0 0 11 13"><path fill="#2e3031" stroke="#606365" stroke-width="1" d="M1.500 12.500h8V6l-4-4.500-4 4.500z"/><path stroke="#787b7d" stroke-width="1" d="M3.500 8.500h4"/></svg>
<svg class="b" style="left:421px;top:506px;" width="11" height="13" viewBox="0 0 11 13"><path fill="#2e3031" stroke="#606365" stroke-width="1" d="M1.500 12.500h8V6l-4-4.500-4 4.500z"/><path stroke="#787b7d" stroke-width="1" d="M3.500 8.500h4"/></svg>
<svg class="b" style="left:438px;top:459px;" width="16" height="18" viewBox="0 0 16 18"><path fill="#f2a72e" d="M8 .8a5.200 5.200 0 0 1 3 9.500v1.400H5v-1.400A5.200 5.200 0 0 1 8 .8z"/><path stroke="#c9cbcd" stroke-width="1" d="M5 12.800h6M5.500 14.800h5"/></svg>
<svg class="b" style="left:1341px;top:92px;" width="14" height="12" viewBox="0 0 14 12"><path fill="none" stroke="#499c54" stroke-width="2.300" d="M1.800 5.200l3.400 3.400L12 2.200"/></svg>
<div class="b" style="left:368px;top:916px;width:993px;height:1px;background:#555555;"></div>
<div class="b" style="left:368px;top:917px;width:993px;height:23px;background:#303234;"></div>
<span class="t" style="left:377.5px;top:919px;font-size:13.5px;letter-spacing:-0.144px;">Index</span>
<svg class="b" style="left:420px;top:924px;" width="7" height="10" viewBox="0 0 7 10"><path fill="none" stroke="#6b6e70" stroke-width="1" d="M2 1.500l3 3.500-3 3.500"/></svg>
<span class="t" style="left:434.8px;top:919px;font-size:13.5px;letter-spacing:-0.203px;">build()</span>
<!-- bottom tool window bar -->
<div class="b" style="left:0px;top:940px;width:1384px;height:1px;background:#323537;"></div>
<svg class="b" style="left:33px;top:944px;" width="16" height="16" viewBox="0 0 16 16"><path fill="none" stroke="#afb1b3" stroke-width="1.800" d="M4.600 4v9.300M10.200 6.500c0 3.500-5.600 2.200-5.600 5.500"/><circle cx="4.600" cy="4.200" r="1.900" fill="#afb1b3"/><circle cx="4.600" cy="13" r="1.900" fill="#afb1b3"/><circle cx="10.200" cy="5.600" r="1.900" fill="#afb1b3"/></svg>
<span class="t" style="left:51.3px;top:943px;font-size:11.5px;letter-spacing:0.181px;">Version Control</span>
<svg class="b" style="left:154px;top:944px;" width="16" height="16" viewBox="0 0 16 16"><path fill="#afb1b3" d="M2 3h2.200v2H2zM5.500 3H13v2H5.500zM2 7h2.200v2H2zM5.500 7H13v2H5.500zM2 11h2.200v2H2zM5.500 11H13v2H5.500z"/></svg>
<span class="t" style="left:171.3px;top:943px;font-size:11.5px;letter-spacing:-0.456px;">TODO</span>
<svg class="b" style="left:222px;top:944px;" width="16" height="16" viewBox="0 0 16 16"><circle cx="8" cy="8" r="5.600" fill="#afb1b3"/><path fill="#3c3f41" d="M7.200 4.500h1.600v4.200H7.200zM7.200 9.800h1.600v1.700H7.200z"/></svg>
<span class="t" style="left:240.5px;top:943px;font-size:11.5px;letter-spacing:-0.003px;">Problems</span>
<svg class="b" style="left:309px;top:944px;" width="16" height="16" viewBox="0 0 16 16"><path fill="#afb1b3" d="M2 2.500h11.500v11H2z"/><path fill="none" stroke="#3c3f41" stroke-width="1.300" d="M4 5.500L6.500 8 4 10.500M7.500 11h4"/></svg>
<span class="t" style="left:327.5px;top:943px;font-size:11.5px;letter-spacing:0.200px;">Terminal</span>
<svg class="b" style="left:391px;top:944px;" width="16" height="16" viewBox="0 0 16 16"><path fill="#afb1b3" d="M1.200 3h13v11h-13z"/><path fill="#afb1b3" d="M3 1.500h2V4H3zM10.500 1.500h2V4h-2z"/><path fill="#3c3f41" d="M3 6h9.500v1.500H3zM3 9h6.500v1.500H3zM3 11.600h9.500v1H3z"/></svg>
<span class="t" style="left:409.6px;top:943px;font-size:11.5px;letter-spacing:0.204px;">Log</span>
<svg class="b" style="left:451px;top:944px;" width="16" height="16" viewBox="0 0 16 16"><path fill="none" stroke="#787b7d" stroke-width="1.300" d="M1.700 1.500v11.300q0 1.500 1.500 1.500h11.500"/><path fill="none" stroke="#787b7d" stroke-width="1.300" d="M4 9.500l3-4 2.500 3 4-4.500"/></svg>
<span class="t" style="left:471.3px;top:943px;font-size:11.5px;letter-spacing:0.123px;">Operation Analyzer</span>
<svg class="b" style="left:595px;top:944px;" width="16" height="16" viewBox="0 0 16 16"><path fill="#afb1b3" d="M1.500 4.500L14.800 1.200 11.500 14.500 8.500 8.500 5.500 12V8z"/><path stroke="#3c3f41" stroke-width="1" d="M14 2L6 8"/></svg>
<span class="t" style="left:615.5px;top:943px;font-size:11.5px;letter-spacing:0.129px;">Profiler</span>
<svg class="b" style="left:674px;top:944px;" width="16" height="16" viewBox="0 0 16 16"><circle cx="6.800" cy="6.800" r="5" fill="none" stroke="#afb1b3" stroke-width="1.600"/><path stroke="#afb1b3" stroke-width="2" d="M10.500 10.500l4 4"/><path fill="none" stroke="#afb1b3" stroke-width="1" d="M5.500 5L4 6.800l1.500 1.800M8 5l1.500 1.800L8 8.600"/></svg>
<span class="t" style="left:692px;top:943px;font-size:11.5px;letter-spacing:0.088px;">Code Linter</span>
<svg class="b" style="left:771px;top:944px;" width="16" height="16" viewBox="0 0 16 16"><path fill="#afb1b3" d="M5 1.800h6.500l3.300 5.700-3.300 5.700H5L1.700 7.500z"/><path fill="#3c3f41" d="M6.500 4.600l5 2.900-5 2.900z"/></svg>
<span class="t" style="left:790px;top:943px;font-size:11.5px;letter-spacing:-0.335px;">Services</span>
<svg class="b" style="left:850px;top:944px;" width="16" height="16" viewBox="0 0 16 16"><path fill="#afb1b3" d="M1.500 4.500L5 1.200l4.500 1.500-2 2 7 7.300-1.800 1.800-7-7.300-2 1.500z"/></svg>
<span class="t" style="left:868.3px;top:943px;font-size:11.5px;letter-spacing:0.381px;">Build</span>
<svg class="b" style="left:916px;top:944px;" width="16" height="16" viewBox="0 0 16 16"><path fill="#afb1b3" d="M2 2h12v3H2zM2 6.200h3.500V14H2zM6.700 6.200H14v3H6.700zM6.700 10.400H14V14H6.700z"/></svg>
<span class="t" style="left:935.5px;top:943px;font-size:11.5px;letter-spacing:0.099px;">ArkUI Inspector</span>
<svg class="b" style="left:1038px;top:944px;" width="16" height="16" viewBox="0 0 16 16"><path fill="none" stroke="#8a8d8f" stroke-width="1.100" d="M2.500 2.500h10.500v12H2.500z"/><path stroke="#8a8d8f" stroke-width="1.100" d="M5.500 1v3M10 1v3M4.500 6.500h6.500M4.500 9h6.500M4.500 11.500h4.500"/></svg>
<span class="t" style="left:1056.3px;top:943px;font-size:11.5px;letter-spacing:0.053px;">PreviewerLog</span>
<!-- status bar -->
<div class="b" style="left:0px;top:963px;width:1384px;height:1px;background:#4a4c4e;"></div>
<svg class="b" style="left:11px;top:967px;" width="14" height="14" viewBox="0 0 14 14"><path fill="none" stroke="#a4a6a8" stroke-width="1" d="M4 1.500h8.500V10H4zM1.500 4v8.500h8.500"/></svg>
<span class="t" style="left:39.75px;top:964px;font-size:13.5px;letter-spacing:-0.733px;">System </span><span class="t" style="left:83.75px;top:964px;font-size:13.5px;letter-spacing:-0.708px;">Low </span><span class="t" style="left:110.25px;top:964px;font-size:13.5px;letter-spacing:0.266px;">Memory: </span><span class="t" style="left:166.5px;top:964px;font-size:13.5px;letter-spacing:-0.532px;">DevEco </span><span class="t" style="left:214.5px;top:964px;font-size:13.5px;letter-spacing:-0.334px;">Studio </span><span class="t" style="left:254.5px;top:964px;font-size:13.5px;letter-spacing:-0.149px;">is </span><span class="t" style="left:268.25px;top:964px;font-size:13.5px;letter-spacing:-0.071px;">running </span><span class="t" style="left:316.25px;top:964px;font-size:13.5px;letter-spacing:-0.079px;">low </span><span class="t" style="left:340.5px;top:964px;font-size:13.5px;letter-spacing:0.592px;">on </span><span class="t" style="left:359.5px;top:964px;font-size:13.5px;letter-spacing:-0.231px;">memory </span><span class="t" style="left:411.25px;top:964px;font-size:13.5px;letter-spacing:-0.083px;">and </span><span class="t" style="left:437px;top:964px;font-size:13.5px;letter-spacing:-0.303px;">this </span><span class="t" style="left:461.25px;top:964px;font-size:13.5px;letter-spacing:-0.103px;">might </span><span class="t" style="left:498px;top:964px;font-size:13.5px;letter-spacing:-0.085px;">affect </span><span class="t" style="left:534.5px;top:964px;font-size:13.5px;letter-spacing:-0.085px;">performance. </span><span class="t" style="left:616.25px;top:964px;font-size:13.5px;letter-spacing:-0.537px;">Click </span><span class="t" style="left:647.5px;top:964px;font-size:13.5px;letter-spacing:-0.807px;">Send </span><span class="t" style="left:679px;top:964px;font-size:13.5px;letter-spacing:0.016px;">Report </span><span class="t" style="left:724.25px;top:964px;font-size:13.5px;letter-spacing:0.600px;">to </span><span class="t" style="left:740px;top:964px;font-size:13.5px;letter-spacing:0.214px;">upload </span><span class="t" style="left:785px;top:964px;font-size:13.5px;letter-spacing:0.528px;">logs </span><span class="t" style="left:815.5px;top:964px;font-size:13.5px;letter-spacing:0.349px;">to </span><span class="t" style="left:830.5px;top:964px;font-size:13.5px;letter-spacing:-0.581px;">assist </span><span class="t" style="left:867.25px;top:964px;font-size:13.5px;letter-spacing:-0.550px;">with </span><span class="t" style="left:893px;top:964px;font-size:13.5px;letter-spacing:0.114px;">troubleshooting </span><span class="t" style="left:990.3px;top:964px;font-size:13.5px;letter-spacing:-0.487px;">a... </span><span class="t" style="left:1010.75px;top:964px;font-size:13.5px;letter-spacing:-0.577px;">(30 </span><span class="t" style="left:1032.5px;top:964px;font-size:13.5px;letter-spacing:-0.487px;">minutes </span><span class="t" style="left:1081px;top:964px;font-size:13.5px;letter-spacing:0.159px;">ago)</span>
<div class="b" style="left:1143px;top:968px;width:12px;height:12px;background:#35a343;border-radius:50%;"></div>
<span class="t" style="left:1167px;top:964px;font-size:13.25px;letter-spacing:-0.473px;">19:4</span>
<span class="t" style="left:1202.2px;top:964px;font-size:12.5px;letter-spacing:-0.850px;">LF</span>
<span class="t" style="left:1226.5px;top:964px;font-size:13.5px;letter-spacing:-0.809px;">UTF-8</span>
<span class="t" style="left:1273.5px;top:964px;font-size:13.5px;">2 </span><span class="t" style="left:1284.3px;top:964px;font-size:13.5px;letter-spacing:-0.745px;">spaces</span>
<svg class="b" style="left:1334px;top:967px;" width="14" height="14" viewBox="0 0 14 14"><path fill="none" stroke="#c4c6c8" stroke-width="1.600" d="M2 7V4.200a2.400 2.400 0 0 1 4.800 0V7"/><rect x="5" y="7" width="7.500" height="6.500" fill="#afb1b3"/></svg>
<svg class="b" style="left:1359px;top:967px;" width="14" height="14" viewBox="0 0 14 14"><circle cx="7" cy="7" r="6.200" fill="#cf5050"/><path fill="#3c3f41" d="M6.100 3.200h1.800v4.600H6.100zM6.100 9h1.800v1.900H6.100z"/></svg>
<!-- left tool stripe -->
<div class="b" style="left:21px;top:58px;width:1px;height:882px;background:#35383a;"></div>
<div class="b" style="left:0px;top:58px;width:22px;height:73px;background:#2d2f30;"></div>
<span class="vt" style="left:5.2px;top:103.8px;transform:rotate(-90deg);letter-spacing:-0.169px;color:#e4e4e4;">Project</span>
<svg class="b" style="left:5px;top:108px;" width="13" height="12" viewBox="0 0 13 12"><path fill="#afb1b3" d="M1 11h11V3.800H6.400L5.300 2H1z"/></svg>
<span class="vt" style="left:5.2px;top:814.5px;transform:rotate(-90deg);letter-spacing:-0.126px;color:#bbbbbb;">Structure</span>
<svg class="b" style="left:6px;top:820px;" width="12" height="11" viewBox="0 0 12 11"><path fill="#afb1b3" d="M6.200 .5h4.300v4.300H6.200zM1.100 6h4.300v4.400H1.100zM6.200 6h4.300v4.400H6.200z"/></svg>
<span class="vt" style="left:5.2px;top:911px;transform:rotate(-90deg);letter-spacing:-0.190px;color:#bbbbbb;">Bookmarks</span>
<svg class="b" style="left:6px;top:915px;" width="12" height="13" viewBox="0 0 12 13"><path fill="#afb1b3" d="M1.200 1h9.200v11.200L5.800 8 1.200 12.200z"/></svg>
<!-- right tool stripe -->
<div class="b" style="left:1361px;top:58px;width:1px;height:882px;background:#303234;"></div>
<div class="b" style="left:1362px;top:58px;width:22px;height:882px;background:#3c3f41;"></div>
<svg class="b" style="left:1365px;top:67px;" width="16" height="16" viewBox="0 0 16 16"><path fill="#afb1b3" d="M7.500 2a4.200 4.200 0 0 1 4.200 4.200V10l1.800 2.200H1.500L3.300 10V6.200A4.200 4.200 0 0 1 7.500 2zM6 13h3l-1.500 1.500z"/><circle cx="11.600" cy="3.700" r="2.700" fill="#3592c4"/></svg>
<span class="vt" style="left:1378.8px;top:86px;transform:rotate(90deg);letter-spacing:0.203px;color:#bbbbbb;">Notifications</span>
<svg class="b" style="left:1364px;top:177px;" width="16" height="16" viewBox="0 0 16 16"><circle cx="8" cy="8" r="6.300" fill="none" stroke="#afb1b3" stroke-width="1.100"/><path fill="#afb1b3" d="M5 4.800h2.500v2.500H5zM8.500 4.800H11v2.500H8.500zM5 8.300h2.500v2.500H5zM8.500 8.300H11v2.500H8.500z"/><circle cx="2" cy="11.500" r="1.300" fill="#afb1b3"/><circle cx="14" cy="11.500" r="1.300" fill="#afb1b3"/><circle cx="8" cy="1.700" r="1.300" fill="#afb1b3"/></svg>
<span class="vt" style="left:1378.8px;top:196.5px;transform:rotate(90deg);letter-spacing:-0.154px;color:#bbbbbb;">AppAnalyzer</span>
<svg class="b" style="left:1365px;top:286px;" width="15" height="12" viewBox="0 0 15 12"><path fill="#afb1b3" d="M7.500 2C4.500 2 2.200 4 1 6c1.200 2 3.500 4 6.500 4s5.300-2 6.500-4c-1.200-2-3.500-4-6.500-4z"/><circle cx="7.500" cy="6" r="2.400" fill="#3c3f41"/><circle cx="7.500" cy="6" r="1.100" fill="#afb1b3"/></svg>
<span class="vt" style="left:1378.8px;top:302.6px;transform:rotate(90deg);letter-spacing:-0.319px;color:#bbbbbb;">Previewer</span>
<svg class="b" style="left:1366px;top:806px;" width="12" height="16" viewBox="0 0 12 16"><rect x="2.300" y="2.300" width="7.600" height="11" rx="1.300" fill="none" stroke="#afb1b3" stroke-width="1.200"/></svg>
<span class="vt" style="left:1378.8px;top:825.5px;transform:rotate(90deg);letter-spacing:-0.305px;color:#bbbbbb;">Device File Browser</span>
<!-- window corner details -->
<svg class="b" style="left:1376px;top:0px;" width="8" height="8" viewBox="1376 0 8 8"><path fill="#1e1e1e" d="M1379.500 0H1384v4.500Q1384 0 1379.500 0z"/><path fill="none" stroke="#454648" stroke-width=".8" d="M1378.500 .900Q1383.300 .900 1383.300 5.800"/></svg>
<svg class="b" style="left:1376px;top:976px;" width="8" height="8" viewBox="1376 976 8 8"><path fill="#cdcdcd" d="M1384 977.500V984h-5.800Q1384 984 1384 977.500z"/></svg>
<svg class="b" style="left:0px;top:976px;" width="8" height="8" viewBox="0 976 8 8"><path fill="#262627" d="M0 980.500V984h3.200Q0 984 0 980.500z"/><path fill="none" stroke="#47484a" stroke-width=".9" d="M.600 978.500Q.600 983.300 5.500 983.300"/></svg>
<svg class="b" style="left:0px;top:0px;" width="12" height="4" viewBox="0 0 12 4"><rect x="1" y="0" width="1" height="2.600" fill="#242424"/><rect x="2" y="0" width="1.200" height="2.800" fill="#6c6c6c"/><rect x="4.500" y="0" width="1.500" height=".8" fill="#303030"/><rect x="9" y="0" width="2.200" height=".9" fill="#686868"/></svg>
</div>
</body>
</html>
